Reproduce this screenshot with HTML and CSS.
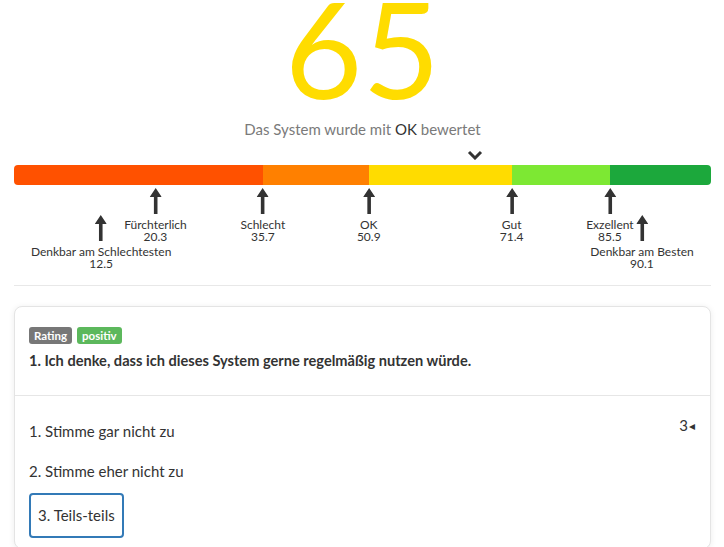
FILE: index.html
```html
<!DOCTYPE html>
<html lang="de">
<head>
<meta charset="utf-8">
<link rel="stylesheet" href="styles.css">
</head>
<body>
<div class="page">
  <section class="score">
    <div class="score-value">65</div>
    <div class="score-text">Das System wurde mit <span class="score-grade">OK</span> bewertet</div>
  </section>

  <section class="gauge">
    <div class="pointer-row">
      <svg class="pointer" style="left:65%" width="16" height="10" viewBox="0 0 16 10"><path d="M2 2 L8 8 L14 2" fill="none" stroke="#333" stroke-width="3"/></svg>
    </div>
    <div class="bar">
      <div class="seg seg-1" style="width:35.7%"></div>
      <div class="seg seg-2" style="width:15.2%"></div>
      <div class="seg seg-3" style="width:20.5%"></div>
      <div class="seg seg-4" style="width:14.1%"></div>
      <div class="seg seg-5" style="width:14.5%"></div>
    </div>
    <div class="markers">
      <div class="marker low" style="left:12.5%">
        <svg class="arrow" width="12" height="26" viewBox="0 0 12 26"><path d="M6 0 L12 9 L7.8 9 L7.8 26 L4.2 26 L4.2 9 L0 9 Z" fill="#333"/></svg>
        <div class="m-label">Denkbar am Schlechtesten</div>
        <div class="m-value">12.5</div>
      </div>
      <div class="marker" style="left:20.3%">
        <svg class="arrow" width="12" height="26" viewBox="0 0 12 26"><path d="M6 0 L12 9 L7.8 9 L7.8 26 L4.2 26 L4.2 9 L0 9 Z" fill="#333"/></svg>
        <div class="m-label">Fürchterlich</div>
        <div class="m-value">20.3</div>
      </div>
      <div class="marker" style="left:35.7%">
        <svg class="arrow" width="12" height="26" viewBox="0 0 12 26"><path d="M6 0 L12 9 L7.8 9 L7.8 26 L4.2 26 L4.2 9 L0 9 Z" fill="#333"/></svg>
        <div class="m-label">Schlecht</div>
        <div class="m-value">35.7</div>
      </div>
      <div class="marker" style="left:50.9%">
        <svg class="arrow" width="12" height="26" viewBox="0 0 12 26"><path d="M6 0 L12 9 L7.8 9 L7.8 26 L4.2 26 L4.2 9 L0 9 Z" fill="#333"/></svg>
        <div class="m-label">OK</div>
        <div class="m-value">50.9</div>
      </div>
      <div class="marker" style="left:71.4%">
        <svg class="arrow" width="12" height="26" viewBox="0 0 12 26"><path d="M6 0 L12 9 L7.8 9 L7.8 26 L4.2 26 L4.2 9 L0 9 Z" fill="#333"/></svg>
        <div class="m-label">Gut</div>
        <div class="m-value">71.4</div>
      </div>
      <div class="marker" style="left:85.5%">
        <svg class="arrow" width="12" height="26" viewBox="0 0 12 26"><path d="M6 0 L12 9 L7.8 9 L7.8 26 L4.2 26 L4.2 9 L0 9 Z" fill="#333"/></svg>
        <div class="m-label">Exzellent</div>
        <div class="m-value">85.5</div>
      </div>
      <div class="marker low" style="left:90.1%">
        <svg class="arrow" width="12" height="26" viewBox="0 0 12 26"><path d="M6 0 L12 9 L7.8 9 L7.8 26 L4.2 26 L4.2 9 L0 9 Z" fill="#333"/></svg>
        <div class="m-label">Denkbar am Besten</div>
        <div class="m-value">90.1</div>
      </div>
    </div>
  </section>

  <hr class="divider">

  <article class="card">
    <header class="card-head">
      <div class="badges">
        <span class="badge badge-grey">Rating</span>
        <span class="badge badge-green">positiv</span>
      </div>
      <h2 class="question">1. Ich denke, dass ich dieses System gerne regelmäßig nutzen würde.</h2>
    </header>
    <div class="card-body">
      <div class="answer-count">3<span class="caret">&#9666;</span></div>
      <ul class="options">
        <li class="option">1. Stimme gar nicht zu</li>
        <li class="option">2. Stimme eher nicht zu</li>
        <li class="option selected">3. Teils-teils</li>
      </ul>
    </div>
  </article>
</div>
</body>
</html>
```

FILE: styles.css
```css
* { box-sizing: border-box; }
html, body { margin: 0; padding: 0; background: #fff; }
body {
  font-family: Lato, "Open Sans", sans-serif;
  color: #333;
  overflow: hidden;
}
.page { padding: 0 13px 0 14px; }

.score { text-align: center; }
.score-value {
  font-family: Lato, sans-serif;
  font-weight: 400;
  font-size: 134px;
  line-height: 96px;
  color: #ffdc00;
}
.score-text {
  margin-top: 23px;
  font-size: 15px;
  line-height: 20px;
  color: #7a7a7a;
}
.score-grade { color: #333; }

.gauge { margin-top: 10px; }
.pointer-row { position: relative; height: 16px; }
.pointer { position: absolute; top: 1px; display: block; }

.bar {
  display: flex;
  height: 20px;
  border-radius: 4px;
  overflow: hidden;
}
.seg { height: 100%; }
.seg-1 { background: #ff5100; }
.seg-2 { background: #ff8000; }
.seg-3 { background: #ffdc00; }
.seg-4 { background: #7de833; }
.seg-5 { background: #1ca83c; }

.markers { position: relative; height: 100px; }
.marker {
  position: absolute;
  top: 3px;
  transform: translateX(-50%);
  display: flex;
  flex-direction: column;
  align-items: center;
  font-size: 12px;
  line-height: 12px;
  color: #333;
  white-space: nowrap;
}
.marker.low { top: 30px; }
.arrow { display: block; margin-bottom: 5px; }

.divider {
  margin: 0;
  border: 0;
  border-top: 1px solid #e8e8e8;
}

.card {
  margin-top: 20px;
  border: 1px solid #e4e4e4;
  border-radius: 8px;
  box-shadow: 0 1px 6px rgba(0,0,0,0.08);
  background: #fff;
}
.card-head {
  padding: 20px 14px 23px;
  border-bottom: 1px solid #e6e6e6;
}
.badges { display: flex; gap: 5px; }
.badge {
  display: inline-block;
  height: 17px;
  padding: 0 5px;
  font-size: 11.5px;
  font-weight: 700;
  line-height: 17px;
  color: #fff;
  border-radius: 3px;
}
.badge-grey { background: #777; }
.badge-green { background: #5cb85c; }
.question {
  margin: 6px 0 0;
  font-size: 14.6px;
  font-weight: 700;
  line-height: 22px;
  color: #333;
}

.card-body {
  position: relative;
  padding: 25px 14px 10px;
}
.answer-count {
  position: absolute;
  right: 15px;
  top: 19px;
  font-size: 15px;
  line-height: 20px;
}
.caret { font-size: 12px; margin-left: 1px; vertical-align: 1px; }
.options {
  list-style: none;
  margin: 0;
  padding: 0;
  display: flex;
  flex-direction: column;
  align-items: flex-start;
  gap: 20px;
}
.option {
  font-size: 15px;
  line-height: 20px;
}
.selected {
  margin-top: -8px;
  padding: 10px 7px 11px;
  border: 2px solid #337ab7;
  border-radius: 4px;
}
```
